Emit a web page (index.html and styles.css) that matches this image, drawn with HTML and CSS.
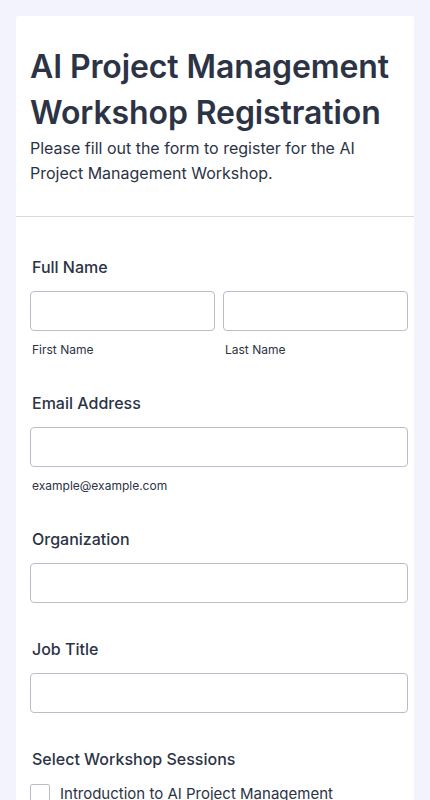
FILE: index.html
```html
<!DOCTYPE html>
<html lang="en">
<head>
  <meta charset="UTF-8" />
  <meta name="viewport" content="width=device-width, initial-scale=1" />
  <title>AI Project Management Workshop Registration</title>
  <link rel="stylesheet" href="styles.css">
</head>
<body>

<div class="form-card">
  <div class="form-header">
    <h1>AI Project Management Workshop Registration</h1>
    <p>Please fill out the form to register for the AI Project Management Workshop.</p>
  </div>

  <div class="form-body">
    <div class="field">
      <label class="field-label">Full Name</label>
      <div class="name-row">
        <div class="name-col">
          <input type="text" id="firstName" />
          <span class="sublabel">First Name</span>
        </div>
        <div class="name-col">
          <input type="text" id="lastName" />
          <span class="sublabel">Last Name</span>
        </div>
      </div>
    </div>

    <div class="field">
      <label class="field-label" for="email">Email Address</label>
      <input type="email" id="email" />
      <span class="sublabel">example@example.com</span>
    </div>

    <div class="field">
      <label class="field-label" for="org">Organization</label>
      <input type="text" id="org" />
    </div>

    <div class="field">
      <label class="field-label" for="job">Job Title</label>
      <input type="text" id="job" />
    </div>

    <div class="field">
      <label class="field-label">Select Workshop Sessions</label>
      <div class="checks">
        <label class="check"><input type="checkbox" /> <span>Introduction to AI Project Management</span></label>
        <label class="check"><input type="checkbox" /> <span>AI Tools for Planning and Scheduling</span></label>
        <label class="check"><input type="checkbox" /> <span>Risk Management with AI</span></label>
      </div>
    </div>

    <div class="field">
      <button class="btn-submit">Submit</button>
    </div>
  </div>
</div>

</body>
</html>
```

FILE: styles.css
```css
* {
  box-sizing: border-box;
}

body {
  margin: 0;
  padding: 16px;
  font-family: Inter, "Noto Sans", Arial, sans-serif;
  background: #f3f3fe;
  color: #2c3345;
}

.form-card {
  background: #fff;
  border-radius: 3px;
}

.form-header {
  padding: 28px 14px 30px;
  border-bottom: 1px solid #d8d9e3;
}

.form-header h1 {
  margin: 0;
  font-size: 32px;
  line-height: 46px;
  font-weight: 600;
  letter-spacing: -0.1px;
}

.form-header p {
  margin: 0;
  font-size: 16px;
  line-height: 25px;
}

.form-body {
  padding: 40px 6px 40px 14px;
}

.field {
  margin-bottom: 36px;
}

.field-label {
  display: block;
  padding-left: 2px;
  font-size: 16px;
  line-height: 20px;
  font-weight: 500;
  margin-bottom: 14px;
}

input[type="text"],
input[type="email"] {
  display: block;
  width: 100%;
  height: 40px;
  border: 1px solid #b8bdc9;
  border-radius: 4px;
  background: #fff;
  padding: 0 10px;
  font: inherit;
}

.name-row {
  display: flex;
  gap: 8px;
}

.name-col {
  flex: 1;
}

.sublabel {
  display: block;
  padding-left: 2px;
  margin-top: 11px;
  margin-bottom: -1px;
  font-size: 12px;
  line-height: 16px;
}

.checks {
  padding-top: 1px;
}

.check {
  display: flex;
  align-items: center;
  gap: 10px;
  margin-bottom: 12px;
  font-size: 15px;
  line-height: 20px;
}

.check input {
  appearance: none;
  width: 20px;
  height: 20px;
  margin: 0;
  border: 1px solid #b8bdc9;
  border-radius: 2px;
  background: #fff;
}

.btn-submit {
  padding: 12px 24px;
  border: none;
  border-radius: 4px;
  background: #18bd5b;
  color: #fff;
  font: inherit;
  font-weight: 600;
}
```
